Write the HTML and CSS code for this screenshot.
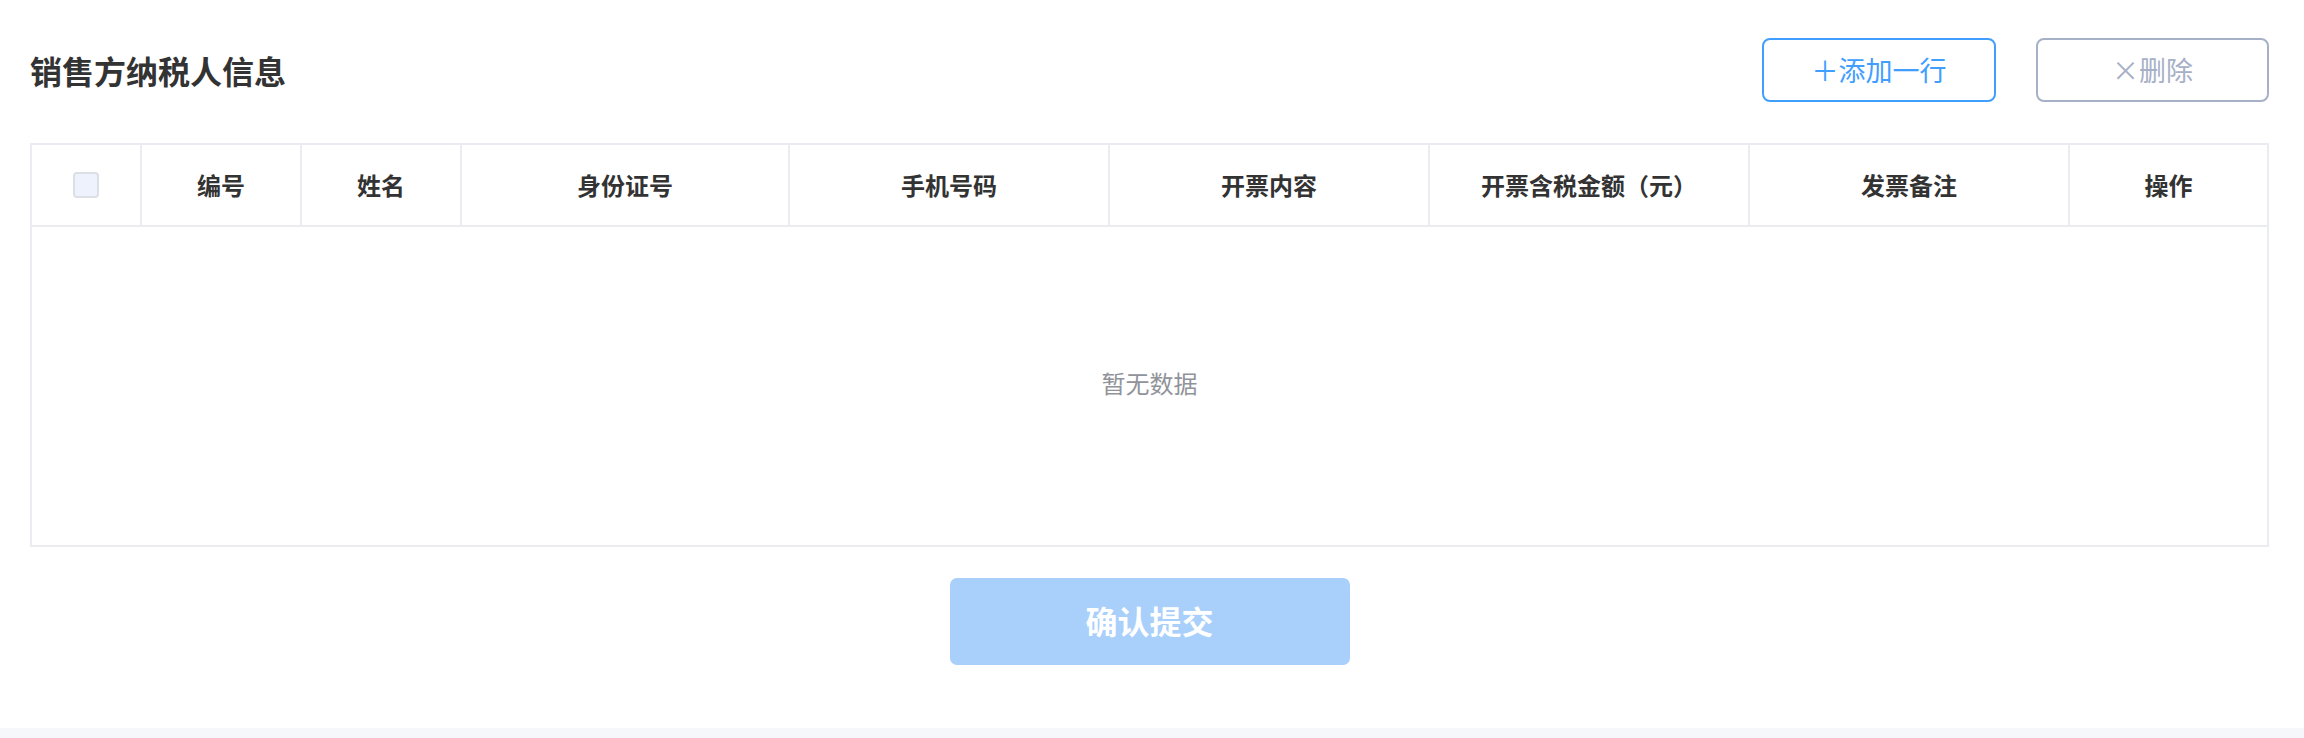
FILE: index.html
```html
<!DOCTYPE html>
<html lang="zh-CN">
<head>
<meta charset="utf-8">
<title>销售方纳税人信息</title>
<link rel="stylesheet" href="styles.css">
</head>
<body>
<div class="card">
  <div class="top">
    <h1 class="title">销售方纳税人信息</h1>
    <div class="actions">
      <button class="btn btn-add">＋添加一行</button>
      <button class="btn btn-del">×删除</button>
    </div>
  </div>
  <div class="table">
    <div class="thead">
      <div class="th"><span class="checkbox"></span></div>
      <div class="th">编号</div>
      <div class="th">姓名</div>
      <div class="th">身份证号</div>
      <div class="th">手机号码</div>
      <div class="th">开票内容</div>
      <div class="th">开票含税金额（元）</div>
      <div class="th">发票备注</div>
      <div class="th last">操作</div>
    </div>
    <div class="tbody"><span class="empty">暂无数据</span></div>
  </div>
  <div class="submit-row">
    <button class="btn-submit">确认提交</button>
  </div>
</div>
</body>
</html>
```

FILE: styles.css
```css
html, body {
  margin: 0;
  padding: 0;
}
body {
  background: #f6f7fb;
  font-family: "Noto Sans CJK SC", "Noto Sans", sans-serif;
  color: #303133;
}
.card {
  background: #ffffff;
  height: 728px;
  box-sizing: border-box;
  padding: 38px 35px 0 30px;
}
.top {
  display: flex;
  align-items: center;
  justify-content: space-between;
  height: 64px;
}
.title {
  margin: 0;
  font-size: 32px;
  font-weight: 700;
  color: #333333;
  line-height: 1;
}
.actions {
  display: flex;
  gap: 40px;
}
.btn {
  width: 234px;
  height: 64px;
  box-sizing: border-box;
  background: #fff;
  border-radius: 8px;
  font-family: "Noto Sans CJK SC", sans-serif;
  font-size: 27px;
  line-height: 1;
  padding: 0 0 2px 0;
  display: flex;
  align-items: center;
  justify-content: center;
}
.btn-add {
  border: 2px solid #409eff;
  color: #409eff;
}
.btn-del {
  width: 233px;
  border: 2px solid #a6b0c6;
  color: #a6b0c6;
}
.table {
  margin-top: 41px;
  border: 2px solid #ebebf2;
}
.thead {
  display: grid;
  grid-template-columns: 110px 160px 160px 328px 320px 320px 320px 320px 1fr;
  height: 80px;
  border-bottom: 2px solid #ebebf2;
}
.th {
  display: flex;
  align-items: center;
  justify-content: center;
  border-right: 2px solid #ebebf2;
  font-size: 24px;
  line-height: 1;
  font-weight: 700;
  color: #333333;
}
.th.last {
  border-right: none;
}
.checkbox {
  width: 26px;
  height: 26px;
  box-sizing: border-box;
  border: 2px solid #dcdfe6;
  background: #edf2fc;
  border-radius: 4px;
}
.tbody {
  height: 318px;
  box-sizing: border-box;
  padding-bottom: 6px;
  display: flex;
  align-items: center;
  justify-content: center;
}
.empty {
  font-size: 24px;
  line-height: 1;
  color: #909399;
}
.submit-row {
  display: flex;
  justify-content: center;
  margin-top: 31px;
}
.btn-submit {
  width: 400px;
  height: 87px;
  border: none;
  border-radius: 7px;
  background: #a9cffb;
  color: #ffffff;
  font-family: "Noto Sans CJK SC", sans-serif;
  font-size: 32px;
  line-height: 1;
  font-weight: 700;
  padding: 0 0 4px 0;
}
```
